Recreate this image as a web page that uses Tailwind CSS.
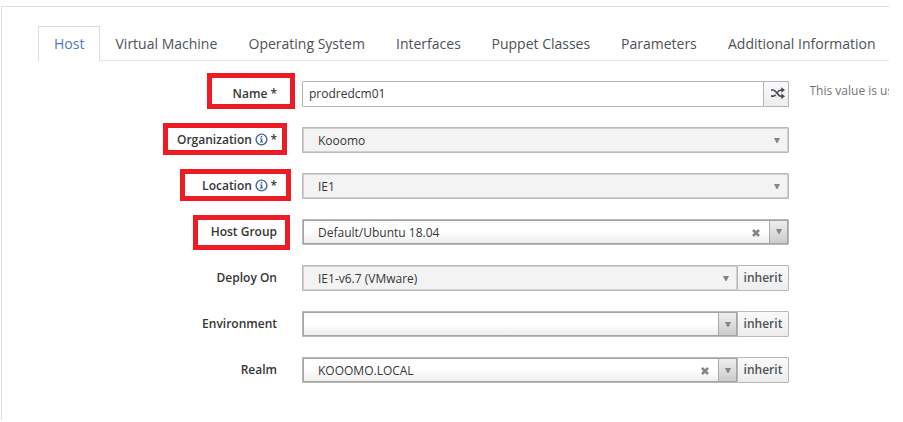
<!DOCTYPE html>
<html lang="en">
<head>
<meta charset="utf-8">
<title>Create Host</title>
<script src="https://cdn.jsdelivr.net/npm/@tailwindcss/browser@4"></script>
</head>
<body class="bg-white h-[422px] overflow-hidden font-['Open_Sans',sans-serif] text-[12px] text-[#363636]">
<svg class="hidden">
  <symbol id="info" viewBox="0 0 13 13"><circle cx="6.5" cy="6.5" r="5.4" fill="none" stroke="#46649c" stroke-width="1.4"/><path d="M5.7 3h1.6v1.4H5.7zM5 5.4h2.3v3.2H8v1H5v-1h.7V6.3H5z" fill="#46649c"/></symbol>
  <symbol id="down" viewBox="0 0 6 5"><path d="M0 0h6L3.5 5h-1z" fill="#858585"/></symbol>
  <symbol id="cross" viewBox="0 0 8 8"><path d="M1 1l6 6M7 1L1 7" stroke="#858585" stroke-width="2.5"/></symbol>
</svg>
<main class="mt-[6px] ml-[1px] w-[888px] h-[414px] overflow-hidden border-t border-l border-[#dedede] pl-[36px] pt-[19px]">
  <nav class="flex h-[35px] w-[900px] text-[14px] leading-[34px] text-[#4d5258] whitespace-nowrap">
    <a class="w-[62px] border border-b-0 border-[#dcdcdc] pl-[15px] text-[#5078c8]">Host</a>
    <a class="w-[133px] border-b border-[#e8e8e8] pl-[15.5px] pt-px">Virtual Machine</a>
    <a class="w-[148px] border-b border-[#e8e8e8] pl-[15.5px] pt-px">Operating System</a>
    <a class="w-[95px] border-b border-[#e8e8e8] pl-[15px] pt-px">Interfaces</a>
    <a class="w-[130px] border-b border-[#e8e8e8] pl-[15.5px] pt-px">Puppet Classes</a>
    <a class="w-[107px] border-b border-[#e8e8e8] pl-[15px] pt-px">Parameters</a>
    <a class="w-[225px] border-b border-[#e8e8e8] pl-[15px] pt-px">Additional Information</a>
  </nav>
  <form class="mt-[20px] flex flex-col gap-[20px] w-[900px] whitespace-nowrap">
    <div class="flex h-[26px]">
      <label class="relative w-[239px] mr-[25px] text-right font-semibold leading-[26px]">Name *<span class="absolute left-[169px] -top-[8px] w-[88px] h-[36px] border-5 border-[#ed1c24]"></span></label>
      <div class="flex w-[487px]">
        <div class="w-[462px] border border-[#b5b5b5] rounded-l-[1px] pl-[6px] leading-[24px]">prodredcm01</div>
        <div class="w-[25px] border border-l-0 border-[#b5b5b5] rounded-r-[1px] bg-linear-to-b from-[#fafafa] to-[#ededed] flex items-center justify-center">
          <svg class="w-[14px] h-[12px] mb-[2px] ml-[3px]" viewBox="0 0 14 12" fill="none" stroke="#454b52" stroke-width="1.7"><path d="M0 3h2.2C5 3 6.8 9.2 9.8 9.2H11M0 9.2h2.2c1 0 1.8-.6 2.5-1.5M6.4 5.2C7.4 4 8.4 3 9.8 3H11"/><path d="M10.3 .2L14 3 10.3 5.8zM10.3 6.4L14 9.2 10.3 12z" fill="#454b52" stroke="none"/></svg>
        </div>
      </div>
      <span class="ml-[20.5px] leading-[20px] text-[#72767b]">This value is used</span>
    </div>
    <div class="flex h-[26px]">
      <label class="relative w-[239px] mr-[25px] flex justify-end items-center font-semibold leading-[26px]">Organization<svg class="w-[13px] h-[13px] ml-[3px] mr-[2.5px] mb-[2px]"><use href="#info"/></svg>*<span class="absolute left-[125px] -top-[4px] w-[124px] h-[32px] border-5 border-[#ed1c24]"></span></label>
      <div class="w-[487px] border border-[#b8b8b8] inset-ring inset-ring-[#cfcfcf] rounded-[1px] bg-[#f3f3f3] flex items-center justify-between pl-[15px] pr-[8px]"><span class="mt-px">Kooomo</span><svg class="w-[6px] h-[5px] mt-px"><use href="#down"/></svg></div>
    </div>
    <div class="flex h-[26px]">
      <label class="relative w-[239px] mr-[25px] flex justify-end items-center font-semibold leading-[26px]">Location<svg class="w-[13px] h-[13px] ml-[3px] mr-[2.5px] mb-[2px]"><use href="#info"/></svg>*<span class="absolute left-[142px] -top-[4px] w-[111px] h-[32px] border-5 border-[#ed1c24]"></span></label>
      <div class="w-[487px] border border-[#b8b8b8] inset-ring inset-ring-[#cfcfcf] rounded-[1px] bg-[#f3f3f3] flex items-center justify-between pl-[15px] pr-[8px]"><span class="mt-px">IE1</span><svg class="w-[6px] h-[5px] mt-px"><use href="#down"/></svg></div>
    </div>
    <div class="flex h-[26px]">
      <label class="relative w-[239px] mr-[25px] text-right font-semibold leading-[25px]">Host Group<span class="absolute left-[155px] -top-[4px] w-[97px] h-[35px] border-5 border-[#ed1c24]"></span></label>
      <div class="w-[487px] border border-[#b8b8b8] rounded-[1px] flex"><div class="flex-1 border border-[#a4a4a4] bg-linear-to-b from-white from-50% to-[#eee] flex items-center pl-[14px]"><span class="mt-px flex-1">Default/Ubuntu 18.04</span><svg class="w-[8px] h-[8px] mt-[2px] mr-[9px]"><use href="#cross"/></svg><span class="self-stretch w-[18px] border-l border-[#aaa] bg-linear-to-b from-[#eee] to-[#ccc] flex items-center justify-center"><svg class="w-[6px] h-[5px] mb-px"><use href="#down"/></svg></span></div></div>
    </div>
    <div class="flex h-[26px]">
      <label class="w-[239px] mr-[25px] text-right font-semibold leading-[25px]">Deploy On</label>
      <div class="w-[435px] border border-r-0 border-[#b8b8b8] inset-ring inset-ring-[#cfcfcf] rounded-l-[1px] bg-[#f3f3f3] flex items-center justify-between pl-[15px] pr-[8px]"><span class="mt-px">IE1-v6.7 (VMware)</span><svg class="w-[6px] h-[5px] mt-px"><use href="#down"/></svg></div>
      <button type="button" class="w-[52px] border border-[#b7b7b7] rounded-r-[1px] bg-linear-to-b from-[#fafafa] to-[#ededed] text-[#4d5258] font-semibold leading-[23px] pb-px">inherit</button>
    </div>
    <div class="flex h-[26px]">
      <label class="w-[239px] mr-[25px] text-right font-semibold leading-[25px]">Environment</label>
      <div class="w-[435px] border border-r-0 border-[#b8b8b8] rounded-l-[1px] flex"><div class="flex-1 border border-[#a4a4a4] bg-linear-to-b from-white from-50% to-[#eee] flex items-center justify-end"><span class="self-stretch w-[18px] border-l border-[#aaa] bg-linear-to-b from-[#eee] to-[#ccc] flex items-center justify-center"><svg class="w-[6px] h-[5px] mt-px"><use href="#down"/></svg></span></div></div>
      <button type="button" class="w-[52px] border border-[#b7b7b7] rounded-r-[1px] bg-linear-to-b from-[#fafafa] to-[#ededed] text-[#4d5258] font-semibold leading-[23px] pb-px">inherit</button>
    </div>
    <div class="flex h-[26px]">
      <label class="w-[239px] mr-[25px] text-right font-semibold leading-[25px]">Realm</label>
      <div class="w-[435px] border border-r-0 border-[#b8b8b8] rounded-l-[1px] flex"><div class="flex-1 border border-[#a4a4a4] bg-linear-to-b from-white from-50% to-[#eee] flex items-center pl-[14px]"><span class="mt-px flex-1">KOOOMO.LOCAL</span><svg class="w-[8px] h-[8px] mt-[2px] mr-[9px]"><use href="#cross"/></svg><span class="self-stretch w-[18px] border-l border-[#aaa] bg-linear-to-b from-[#eee] to-[#ccc] flex items-center justify-center"><svg class="w-[6px] h-[5px] mt-px"><use href="#down"/></svg></span></div></div>
      <button type="button" class="w-[52px] border border-[#b7b7b7] rounded-r-[1px] bg-linear-to-b from-[#fafafa] to-[#ededed] text-[#4d5258] font-semibold leading-[23px] pb-px">inherit</button>
    </div>
  </form>
</main>
</body>
</html>
